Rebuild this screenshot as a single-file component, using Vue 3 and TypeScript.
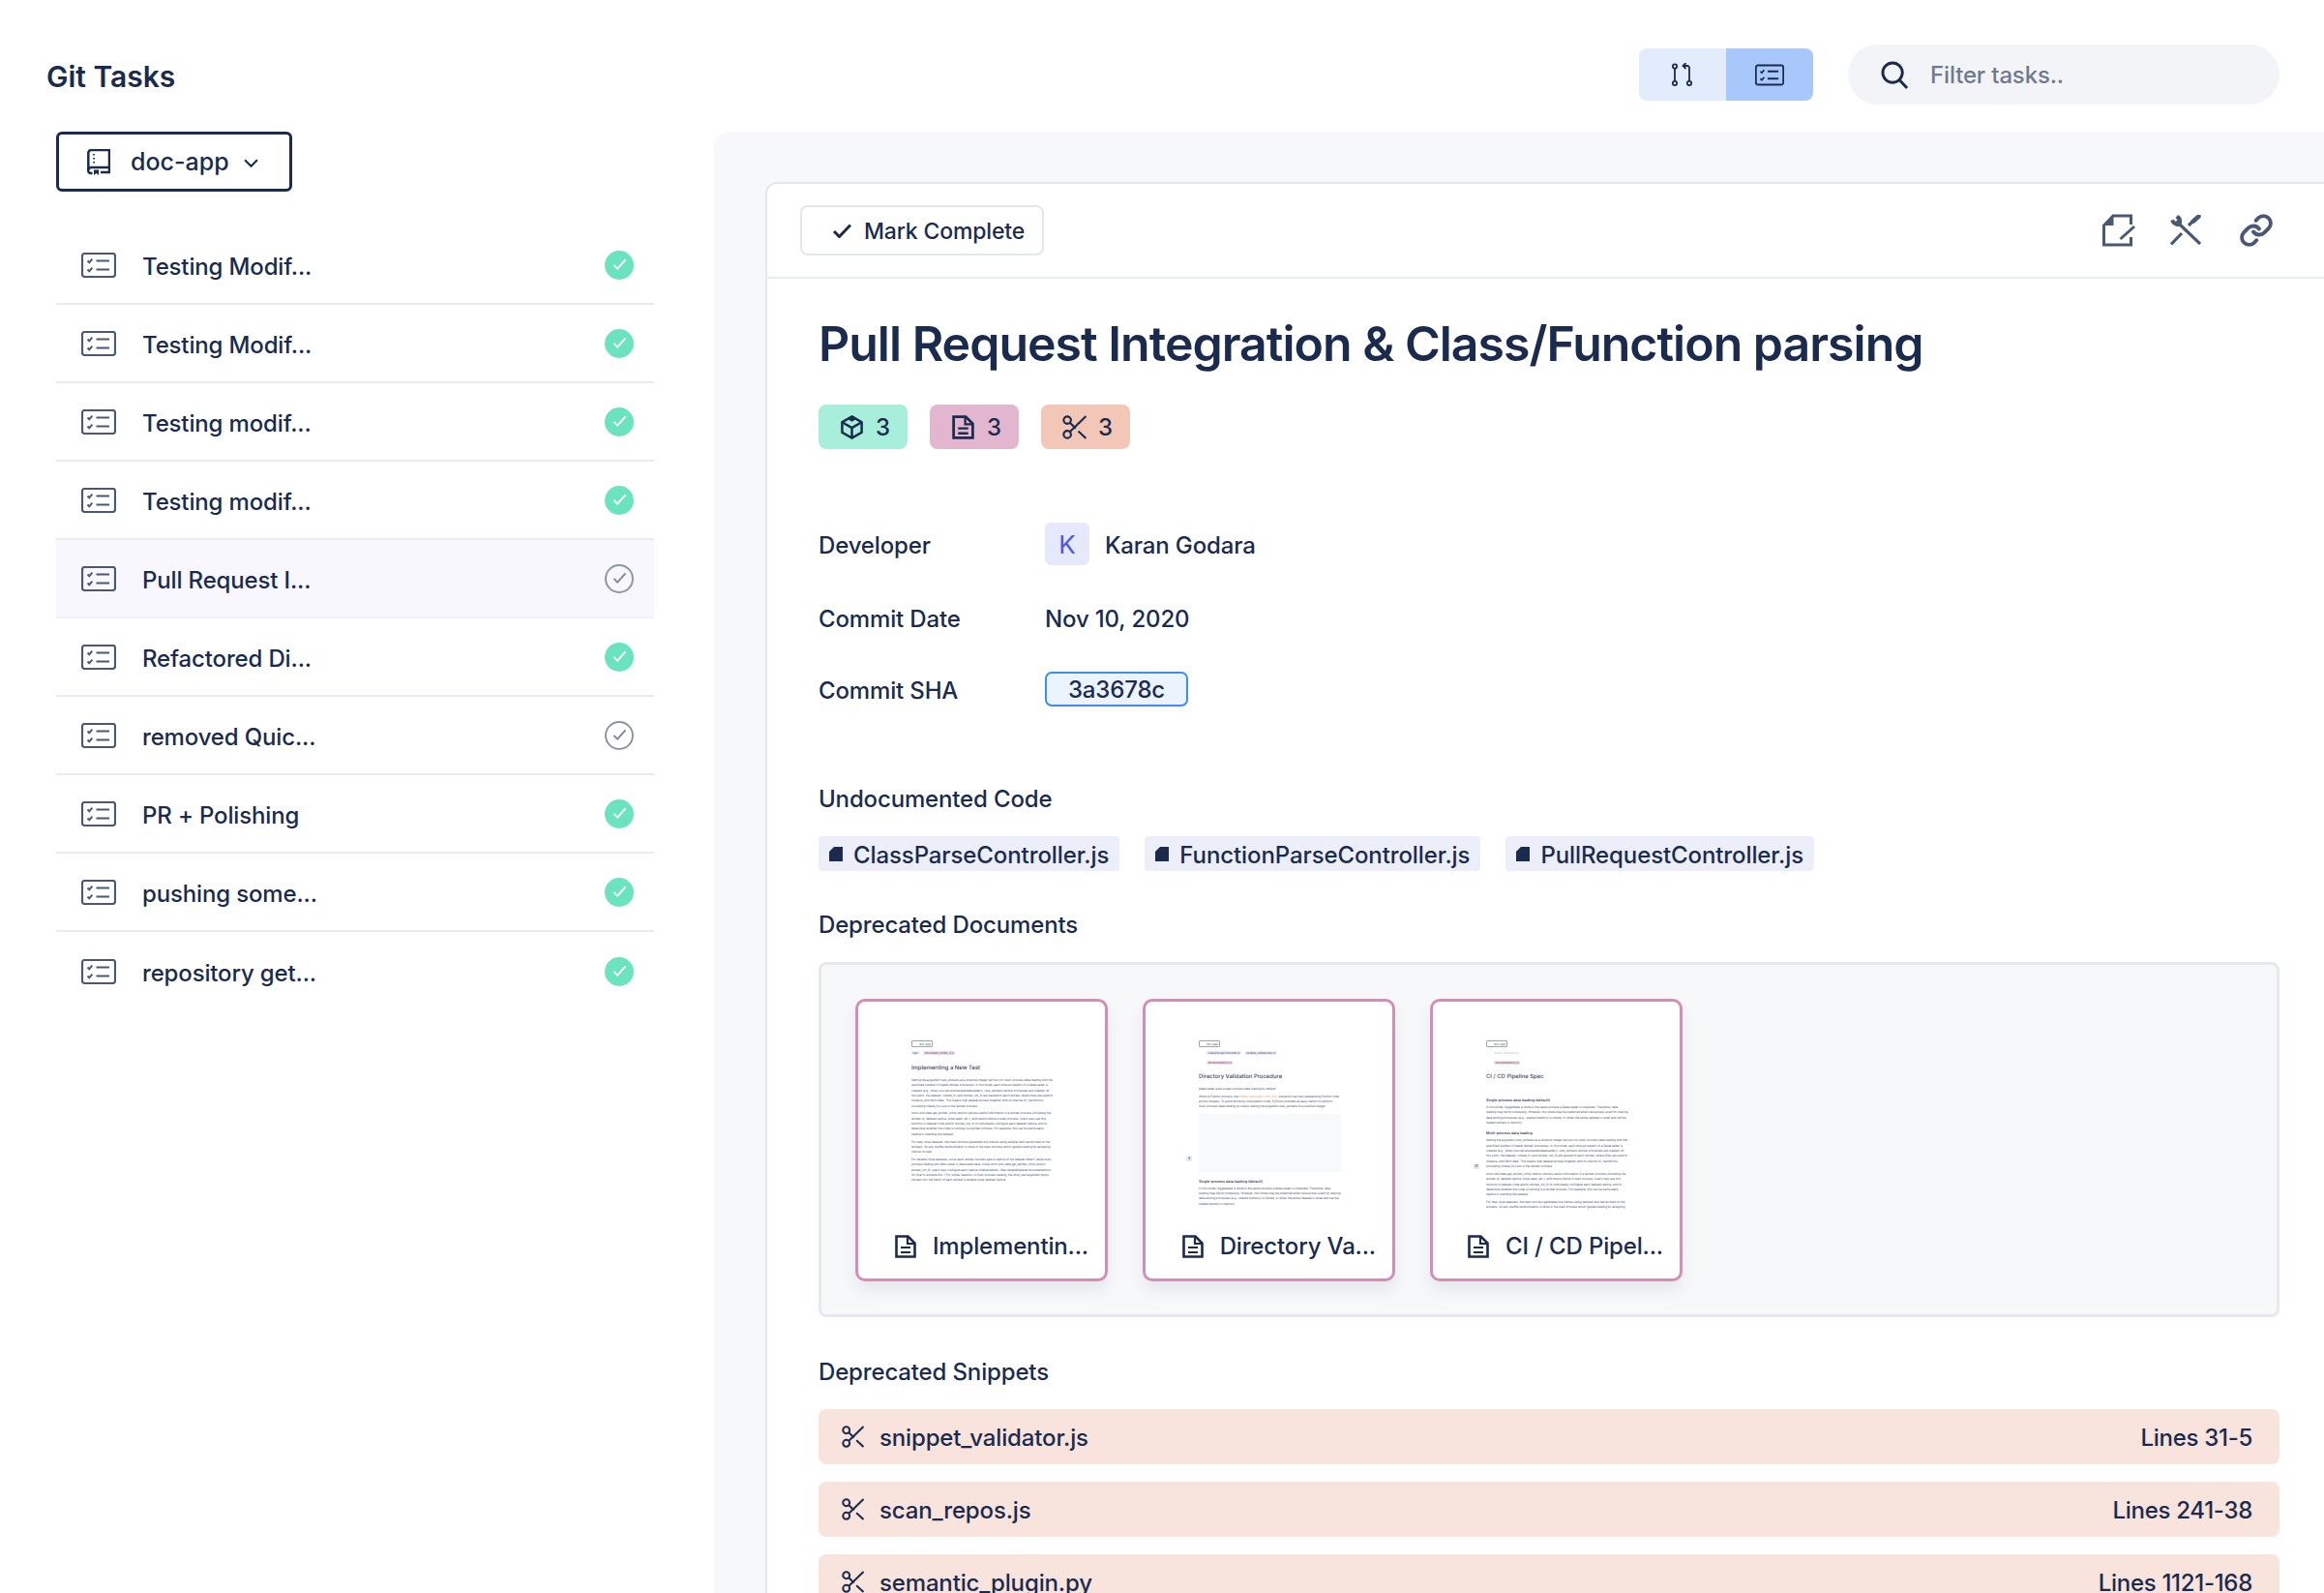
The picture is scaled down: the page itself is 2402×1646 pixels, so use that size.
<script setup lang="ts">
interface Task {
  title: string
  done: boolean
  active?: boolean
}

const tasks: Task[] = [
  { title: 'Testing Modif...', done: true },
  { title: 'Testing Modif...', done: true },
  { title: 'Testing modif...', done: true },
  { title: 'Testing modif...', done: true },
  { title: 'Pull Request I...', done: false, active: true },
  { title: 'Refactored Di...', done: true },
  { title: 'removed Quic...', done: false },
  { title: 'PR + Polishing', done: true },
  { title: 'pushing some...', done: true },
  { title: 'repository get...', done: true },
]

const badges = [
  { icon: 'i-cube', cls: 'badge--green' },
  { icon: 'i-doc', cls: 'badge--pink' },
  { icon: 'i-scissors', cls: 'badge--orange' },
]

const files = ['ClassParseController.js', 'FunctionParseController.js', 'PullRequestController.js']

const snippets = [
  { name: 'snippet_validator.js', lines: 'Lines 31-5' },
  { name: 'scan_repos.js', lines: 'Lines 241-38' },
  { name: 'semantic_plugin.py', lines: 'Lines 1121-168' },
]

// тексты превью документов
const workers =
  'Setting the argument num_workers as a positive integer will turn on multi-process data loading with the specified number of loader worker processes. In this mode, each time an iterator of a DataLoader is created (e.g., when you call enumerate(dataloader)), num_workers worker processes are created. At this point, the dataset, collate_fn, and worker_init_fn are passed to each worker, where they are used to initialize, and fetch data. This means that dataset access together with its internal IO, transforms (including collate_fn) runs in the worker process.'
const info =
  'torch.utils.data.get_worker_info() returns various useful information in a worker process (including the worker id, dataset replica, initial seed, etc.), and returns None in main process. Users may use this function in dataset code and/or worker_init_fn to individually configure each dataset replica, and to determine whether the code is running in a worker process. For example, this can be particularly helpful in sharding the dataset.'
const mapStyle =
  'For map-style datasets, the main process generates the indices using sampler and sends them to the workers. So any shuffle randomization is done in the main process which guides loading by assigning indices to load.'
const iterable =
  "For iterable-style datasets, since each worker process gets a replica of the dataset object, naive multi-process loading will often result in duplicated data. Using torch.utils.data.get_worker_info() and/or worker_init_fn, users may configure each replica independently. (See IterableDataset documentations for how to achieve this. ) For similar reasons, in multi-process loading, the drop_last argument drops the last non-full batch of each worker's iterable-style dataset replica."
const single =
  'In this mode, loggeddata is done in the same process a DataLoader is initialized. Therefore, data loading may block computing. However, this mode may be preferred when resource(s) used for sharing data among processes (e.g., shared memory) is limited, or when the entire dataset is small and can be loaded entirely in memory.'
</script>

<template>
  <div class="page">
    <svg class="sprite" xmlns="http://www.w3.org/2000/svg">
      <symbol id="i-task" viewBox="0 0 36 26">
        <rect x="1" y="1" width="34" height="24" rx="2.5" fill="none" stroke="currentColor" stroke-width="2.2" />
        <path d="M6.5 8.5l1.800 1.800 3-3.600M6.5 17.5l1.800 1.800 3-3.600" fill="none" stroke="currentColor" stroke-width="2" />
        <path d="M15.5 8.5H29M15.5 17.5H29" fill="none" stroke="currentColor" stroke-width="2.200" />
      </symbol>
      <symbol id="i-book" viewBox="0 0 24 27">
        <path d="M1.300 22V4a3 3 0 0 1 3-3H23v23h-9M1.300 22a3 3 0 0 1 3-3H23M5.500 25H3.500a2.500 2.500 0 0 1-2.200-3" fill="none" stroke="currentColor" stroke-width="2.500" />
        <path d="M7 21.500h5V27l-2.500-2L7 27z" fill="currentColor" />
        <path d="M7 5v1.500M7 9v1.500M7 13v1.500" fill="none" stroke="currentColor" stroke-width="1.800" />
      </symbol>
      <symbol id="i-pr" viewBox="0 0 22 24">
        <g fill="none" stroke="currentColor" stroke-width="1.800">
          <circle cx="3" cy="3.500" r="2.200" />
          <circle cx="3" cy="21" r="2.200" />
          <circle cx="18" cy="21" r="2.200" />
          <path d="M3 5.700v13M18 18.800V5a2 2 0 0 0-2-2h-4M14.500 0l-3 3 3 3" />
        </g>
      </symbol>
      <symbol id="i-search" viewBox="0 0 30 30">
        <circle cx="12.500" cy="12.500" r="10.500" fill="none" stroke="currentColor" stroke-width="3" />
        <path d="M20 20.500L28 29" fill="none" stroke="currentColor" stroke-width="3" />
      </symbol>
      <symbol id="i-edit" viewBox="0 0 34 34">
        <path d="M29.500 11V2H11L1.500 12v20h28v-8" fill="none" stroke="currentColor" stroke-width="3" />
        <path d="M11.500 1L0 12h11.500z" fill="currentColor" />
        <path d="M18.500 26L33 13" fill="none" stroke="currentColor" stroke-width="3" />
      </symbol>
      <symbol id="i-tools" viewBox="0 0 32 32">
        <path d="M9.500 9.500L31 30M1 30.500L12 19M19 11l5-5" fill="none" stroke="currentColor" stroke-width="3.200" />
        <path d="M24 6.500L29.500 1.500" fill="none" stroke="currentColor" stroke-width="4.500" stroke-linecap="round" />
        <path d="M8 .3C11 1 12.500 4 12 8.500L9 12C5.500 12 1.500 10 .3 6L3.500 4.800 5.800 7 7.500 5.200 5.500 3z" fill="currentColor" />
      </symbol>
      <symbol id="i-link" viewBox="0 0 24 24">
        <path d="M10 13a5 5 0 0 0 7.540.540l3-3a5 5 0 0 0-7.070-7.070l-1.720 1.710" fill="none" stroke="currentColor" stroke-width="2.600" stroke-linecap="round" />
        <path d="M14 11a5 5 0 0 0-7.540-.540l-3 3a5 5 0 0 0 7.070 7.070l1.710-1.710" fill="none" stroke="currentColor" stroke-width="2.600" stroke-linecap="round" />
      </symbol>
      <symbol id="i-cube" viewBox="0 0 24 26">
        <path d="M12 1.500l10.500 6v11L12 24.500l-10.500-6v-11z" fill="none" stroke="currentColor" stroke-width="2.600" />
        <path d="M1.500 7.500l7 4 3.500 2 3.500-2 7-4M12 13.500v11" fill="none" stroke="currentColor" stroke-width="2.600" />
        <path d="M12 1l5 3-5 3-5-3z" fill="currentColor" />
      </symbol>
      <symbol id="i-doc" viewBox="0 0 22 24">
        <path d="M1.500 1.500h12l7 7v14h-19z" fill="none" stroke="currentColor" stroke-width="2.600" />
        <path d="M13 2v7h7M6 13h10M6 18h10" fill="none" stroke="currentColor" stroke-width="2.200" />
      </symbol>
      <symbol id="i-scissors" viewBox="0 0 22 22">
        <g fill="none" stroke="currentColor" stroke-width="1.900">
          <circle cx="4.500" cy="4.500" r="3.300" />
          <circle cx="4.500" cy="17.500" r="3.300" />
          <path d="M7 15L21.500 1M7 7l5.200 5M14.500 14.500l7 6.500" />
        </g>
      </symbol>
      <symbol id="i-file" viewBox="0 0 14 15">
        <path d="M5 0h9v15H0V5z" fill="currentColor" />
      </symbol>
    </svg>

    <header class="header">
      <h1 class="header__title">Git Tasks</h1>
      <div class="header__controls">
        <div class="toggle">
          <button class="toggle__btn">
            <svg class="toggle__pr"><use href="#i-pr" /></svg>
          </button>
          <button class="toggle__btn toggle__btn--on">
            <svg class="toggle__task"><use href="#i-task" /></svg>
          </button>
        </div>
        <div class="search">
          <svg class="search__icon"><use href="#i-search" /></svg>
          <span class="search__text">Filter tasks..</span>
        </div>
      </div>
    </header>

    <div class="layout">
      <aside class="sidebar">
        <button class="repo">
          <svg class="repo__icon"><use href="#i-book" /></svg>
          <span>doc-app</span>
          <svg class="repo__chevron" viewBox="0 0 14 9">
            <path d="M1 1l6 6 6-6" fill="none" stroke="currentColor" stroke-width="2" />
          </svg>
        </button>

        <ul class="tasks">
          <li v-for="(task, i) in tasks" :key="i" class="task" :class="{ 'task--active': task.active }">
            <svg class="task__icon"><use href="#i-task" /></svg>
            <span class="task__title">{{ task.title }}</span>
            <span class="status" :class="task.done ? 'status--done' : 'status--open'">
              <svg viewBox="0 0 16 14" class="status__check">
                <path d="M1.500 7.500l4 4L14.500 1.500" fill="none" stroke="currentColor" stroke-width="2" />
              </svg>
            </span>
          </li>
        </ul>
      </aside>

      <main class="panel">
        <section class="card">
          <div class="toolbar">
            <button class="complete">
              <svg class="complete__check" viewBox="0 0 19 15">
                <path d="M1 8l5.500 5.500L18 1.500" fill="none" stroke="currentColor" stroke-width="3" />
              </svg>
              <span class="complete__text">Mark Complete</span>
            </button>
            <div class="toolbar__icons">
              <svg class="tool tool--edit"><use href="#i-edit" /></svg>
              <svg class="tool tool--tools"><use href="#i-tools" /></svg>
              <svg class="tool tool--link"><use href="#i-link" /></svg>
            </div>
          </div>

          <div class="content">
            <h2 class="title">Pull Request Integration &amp; Class/Function parsing</h2>

            <div class="badges">
              <span v-for="badge in badges" :key="badge.icon" class="badge" :class="badge.cls">
                <svg class="badge__icon"><use :href="'#' + badge.icon" /></svg>
                3
              </span>
            </div>

            <div class="meta">
              <span class="meta__label">Developer</span>
              <span class="meta__dev">
                <span class="avatar">K</span>
                <span class="meta__label">Karan Godara</span>
              </span>
              <span>Commit Date</span>
              <span>Nov 10, 2020</span>
              <span class="meta__label">Commit SHA</span>
              <span class="sha">3a3678c</span>
            </div>

            <h3 class="section section--code">Undocumented Code</h3>
            <div class="files">
              <span v-for="file in files" :key="file" class="file">
                <svg class="file__icon"><use href="#i-file" /></svg>
                <span class="file__name">{{ file }}</span>
              </span>
            </div>

            <h3 class="section section--docs">Deprecated Documents</h3>
            <div class="docs">
              <article class="doc">
                <div class="thumb">
                  <span class="thumb__repo">doc-app</span>
                  <div class="thumb__refs"><span class="thumb__ref">test</span><span class="thumb__ref thumb__ref--pink">document_folder_3.js</span></div>
                  <div class="thumb__title thumb__title--first">Implementing a New Test</div>
                  <p>{{ workers }}</p>
                  <p>{{ info }}</p>
                  <p>{{ mapStyle }}</p>
                  <p>{{ iterable }}</p>
                </div>
                <div class="doc__label">
                  <svg class="doc__icon"><use href="#i-doc" /></svg>
                  Implementin...
                </div>
              </article>

              <article class="doc">
                <div class="thumb">
                  <span class="thumb__repo">doc-app</span>
                  <div class="thumb__refs thumb__refs--indent"><span class="thumb__ref">ClassParseController.js</span><span class="thumb__ref">update_references.js</span></div>
                  <div class="thumb__refs thumb__refs--indent"><span class="thumb__ref thumb__ref--pink">documentation.js</span></div>
                  <div class="thumb__title">Directory Validation Procedure</div>
                  <p>DataLoader uses single-process data loading by default.</p>
                  <p>Within a Python process, the <span class="thumb__orange">Global Interpreter Lock (GIL)</span> prevents true fully parallelizing Python code across threads. To avoid blocking computation code, PyTorch provides an easy switch to perform multi-process data loading by simply setting the argument num_workers to a positive integer.</p>
                  <div class="thumb__image"></div>
                  <div class="thumb__head">Single-process data loading (default)</div>
                  <p>{{ single }}</p>
                </div>
                <span class="thumb__side">#</span>
                <div class="doc__label">
                  <svg class="doc__icon"><use href="#i-doc" /></svg>
                  Directory Va...
                </div>
              </article>

              <article class="doc">
                <div class="thumb">
                  <span class="thumb__repo">doc-app</span>
                  <div class="thumb__refs thumb__refs--indent"><span class="thumb__muted">Attach References</span></div>
                  <div class="thumb__refs thumb__refs--indent"><span class="thumb__ref thumb__ref--pink">documentation.js</span></div>
                  <div class="thumb__title">CI / CD Pipeline Spec</div>
                  <div class="thumb__head thumb__head--gap">Single-process data loading (default)</div>
                  <p>{{ single }}</p>
                  <div class="thumb__head">Multi-process data loading</div>
                  <p>{{ workers }}</p>
                  <p>{{ info }}</p>
                  <p>{{ mapStyle }}</p>
                </div>
                <span class="thumb__side thumb__side--low">#1</span>
                <div class="doc__label">
                  <svg class="doc__icon"><use href="#i-doc" /></svg>
                  CI / CD Pipel...
                </div>
              </article>
            </div>

            <h3 class="section section--snippets">Deprecated Snippets</h3>
            <div class="snippets">
              <div v-for="snippet in snippets" :key="snippet.name" class="snippet">
                <svg class="snippet__icon"><use href="#i-scissors" /></svg>
                <span class="snippet__name">{{ snippet.name }}</span>
                <span class="snippet__lines">{{ snippet.lines }}</span>
              </div>
            </div>
          </div>
        </section>
      </main>
    </div>
  </div>
</template>

<style scoped>
.page {
  width: 2402px;
  height: 1646px;
  overflow: hidden;
  background: #fff;
  color: #1a2b4d;
  font-family: Inter, "Noto Sans", sans-serif;
  font-size: 24px;
  font-weight: 500;
  letter-spacing: -0.15px;
}
.sprite {
  display: none;
}
button {
  font: inherit;
  color: inherit;
  background: none;
  letter-spacing: inherit;
}

.header {
  height: 136px;
  box-sizing: border-box;
  padding: 46px 46px 0 48px;
  display: flex;
  justify-content: space-between;
  align-items: flex-start;
}
.header__title {
  margin: 14px 0 0;
  font-size: 30px;
  line-height: 38px;
  font-weight: 600;
  letter-spacing: 0;
}
.header__controls {
  display: flex;
  align-items: center;
  gap: 36px;
}
.toggle {
  display: flex;
  height: 54px;
  border-radius: 8px;
  overflow: hidden;
}
.toggle__btn {
  width: 90px;
  border: 0;
  padding: 0;
  background: #e3ecfd;
  display: flex;
  align-items: center;
  justify-content: center;
}
.toggle__btn--on {
  background: #a8c8fc;
}
.toggle__pr {
  width: 22px;
  height: 24px;
}
.toggle__task {
  width: 30px;
  height: 23px;
}
.search {
  width: 446px;
  height: 62px;
  box-sizing: border-box;
  padding-left: 34px;
  border-radius: 31px;
  background: #f2f4f8;
  display: flex;
  align-items: center;
  gap: 22px;
}
.search__icon {
  width: 29px;
  height: 29px;
}
.search__text {
  color: #6f7a8f;
}

.layout {
  display: flex;
  height: 1510px;
}
.sidebar {
  width: 738px;
  flex: none;
  box-sizing: border-box;
  padding: 0 62px 0 58px;
}
.repo {
  width: 244px;
  height: 62px;
  box-sizing: border-box;
  border: 3px solid #1a2b4d;
  border-radius: 6px;
  padding: 0 0 0 29px;
  display: flex;
  align-items: center;
  font-size: 25px;
  letter-spacing: 0;
}
.repo__icon {
  width: 24px;
  height: 27px;
  margin-right: 21px;
}
.repo__chevron {
  width: 15px;
  height: 10px;
  margin-left: 15px;
  margin-top: 3px;
}
.tasks {
  list-style: none;
  margin: 36px 0 0;
  padding: 0;
}
.task {
  height: 81px;
  box-sizing: border-box;
  padding: 0 21px 0 26px;
  border-bottom: 2px solid #e8ebef;
  display: flex;
  align-items: center;
}
.task:last-child {
  border-bottom: 0;
}
.task--active {
  background: #f7f7fd;
  border-bottom-color: #f1f1f9;
}
.task__icon {
  width: 36px;
  height: 26px;
  color: #4a5875;
  margin-right: 27px;
}
.task__title {
  flex: 1;
  padding-top: 3px;
}
.status {
  width: 30px;
  height: 30px;
  box-sizing: border-box;
  border-radius: 50%;
  display: flex;
  align-items: center;
  justify-content: center;
}
.status--done {
  background: #6ce3bf;
  color: #fff;
}
.status--open {
  border: 2px solid #8d95a8;
  color: #7d8699;
}
.status__check {
  width: 15px;
  height: 13px;
}

.panel {
  flex: 1;
  box-sizing: border-box;
  background: #f7f8fa;
  border-top-left-radius: 16px;
  padding: 52px 0 0 53px;
}
.card {
  height: 100%;
  background: #fff;
  border-top: 2px solid #e5e7eb;
  border-left: 2px solid #e5e7eb;
  border-top-left-radius: 12px;
}
.toolbar {
  height: 98px;
  box-sizing: border-box;
  border-bottom: 2px solid #e8ebef;
  padding: 22px 52px 0 34px;
  display: flex;
  justify-content: space-between;
  align-items: flex-start;
}
.complete {
  width: 252px;
  height: 52px;
  box-sizing: border-box;
  border: 2px solid #e3e7ec;
  border-radius: 8px;
  padding: 0 0 0 32px;
  display: flex;
  align-items: center;
  gap: 13px;
  font-size: 23px;
}
.complete__text {
  padding-top: 2px;
}
.complete__check {
  width: 19px;
  height: 15px;
}
.toolbar__icons {
  display: flex;
  align-items: center;
  height: 36px;
  margin-top: 8px;
  color: #4a5875;
}
.tool--edit {
  width: 34px;
  height: 34px;
}
.tool--tools {
  width: 32px;
  height: 32px;
  margin-left: 36px;
}
.tool--link {
  width: 36px;
  height: 36px;
  margin-left: 39px;
}

.content {
  padding: 37px 46px 0 53px;
}
.title {
  margin: 0;
  font-size: 50px;
  line-height: 60px;
  font-weight: 600;
  letter-spacing: -1px;
}
.badges {
  display: flex;
  gap: 23px;
  margin-top: 33px;
}
.badge {
  width: 92px;
  height: 46px;
  box-sizing: border-box;
  padding-left: 22px;
  border-radius: 8px;
  display: flex;
  align-items: center;
  gap: 12px;
}
.badge__icon {
  width: 25px;
  height: 25px;
}
.badge--green {
  background: #a7efdb;
}
.badge--pink {
  background: #e2b6cf;
}
.badge--orange {
  background: #f3c7b7;
}
.meta {
  margin-top: 76px;
  display: grid;
  grid-template-columns: 234px 1fr;
  grid-auto-rows: minmax(36px, auto);
  row-gap: 37px;
  align-items: center;
  justify-items: start;
}
.meta__label {
  padding-top: 2px;
}
.meta__dev {
  display: flex;
  align-items: center;
  gap: 16px;
}
.avatar {
  width: 46px;
  height: 44px;
  border-radius: 6px;
  background: #e6e8fb;
  color: #4f55e0;
  font-size: 26px;
  font-weight: 400;
  display: flex;
  align-items: center;
  justify-content: center;
}
.sha {
  width: 148px;
  height: 36px;
  box-sizing: border-box;
  border: 2px solid #3f8cf7;
  border-radius: 7px;
  background: #ebf3fe;
  display: flex;
  align-items: center;
  justify-content: center;
}
.section {
  margin: 0;
  font-size: 24px;
  line-height: 28px;
  font-weight: 500;
}
.section--code {
  margin-top: 82px;
}
.section--docs {
  margin-top: 42px;
}
.section--snippets {
  margin-top: 43px;
}
.files {
  display: flex;
  gap: 26px;
  margin-top: 24px;
}
.file {
  height: 36px;
  box-sizing: border-box;
  padding: 0 11px;
  border-radius: 4px;
  background: #eceefa;
  display: flex;
  align-items: center;
  gap: 11px;
}
.file__name {
  padding-top: 2px;
  letter-spacing: -0.1px;
}
.file__icon {
  width: 14px;
  height: 15px;
}
.docs {
  margin-top: 24px;
  height: 367px;
  box-sizing: border-box;
  border: 3px solid #e5e8ec;
  border-radius: 8px;
  background: #f7f8fa;
  padding: 35px 35px;
  display: flex;
  gap: 36px;
}
.doc {
  position: relative;
  width: 261px;
  height: 292px;
  box-sizing: border-box;
  padding-top: 40px;
  border: 3px solid #d28fb5;
  border-radius: 10px;
  background: #fff;
  box-shadow: 0 10px 16px rgba(30, 45, 80, 0.08);
}
.doc__label {
  display: flex;
  align-items: center;
  justify-content: flex-end;
  gap: 17px;
  margin-top: 23px;
  padding-right: 17px;
  white-space: nowrap;
}
.doc__icon {
  width: 22px;
  height: 24px;
}
.thumb {
  width: 147px;
  height: 175px;
  margin-left: 55px;
  overflow: hidden;
  font-size: 3px;
  line-height: 5.35px;
  font-weight: 400;
  letter-spacing: 0;
  color: #3a4560;
  text-rendering: geometricPrecision;
}
.thumb p {
  margin: 0 0 2.400px;
}
.thumb__repo {
  display: block;
  width: 22px;
  height: 7px;
  box-sizing: border-box;
  border: 0.6px solid #9aa3b5;
  border-radius: 1px;
  line-height: 6px;
  padding-left: 7px;
}
.thumb__refs {
  display: flex;
  gap: 4px;
  margin-top: 3px;
  height: 6px;
  padding-top: 1px;
}
.thumb__refs--indent {
  padding-left: 8px;
}
.thumb__ref {
  background: #eceefa;
  padding: 0 1.500px;
  line-height: 4px;
  height: 4px;
  color: #3c4664;
}
.thumb__ref--pink {
  background: #f6dfeb;
}
.thumb__muted {
  color: #b9bfcb;
  line-height: 4px;
}
.thumb__title {
  margin: 7px 0 6px;
  font-size: 5.900px;
  line-height: 8px;
  font-weight: 500;
  color: #3a4560;
}
.thumb__title--first {
  margin-top: 8px;
}
.thumb__head {
  margin: 5px 0 2px;
  font-size: 3.700px;
  line-height: 6px;
  font-weight: 600;
  color: #3a4560;
}
.thumb__head--gap {
  margin-top: 17px;
}
.thumb__image {
  height: 60px;
  background: #f8f9fb;
  margin: 4px 0 7px;
}
.thumb__orange {
  color: #f0964f;
}
.thumb__side {
  position: absolute;
  left: 42px;
  top: 160px;
  width: 6px;
  height: 5px;
  background: #e6e8fb;
  font-size: 3px;
  line-height: 5px;
  text-align: center;
  font-weight: 400;
}
.thumb__side--low {
  top: 168px;
}
.snippets {
  margin-top: 24px;
  display: flex;
  flex-direction: column;
  gap: 18px;
}
.snippet {
  height: 57px;
  flex: none;
  box-sizing: border-box;
  padding: 0 28px 0 24px;
  border-radius: 8px;
  background: #f9e3dd;
  display: flex;
  align-items: center;
}
.snippet__icon {
  width: 23px;
  height: 23px;
  margin-right: 16px;
}
.snippet__name {
  flex: 1;
  padding-top: 2px;
}
.snippet__lines {
  padding-top: 2px;
  letter-spacing: -0.3px;
}
</style>
